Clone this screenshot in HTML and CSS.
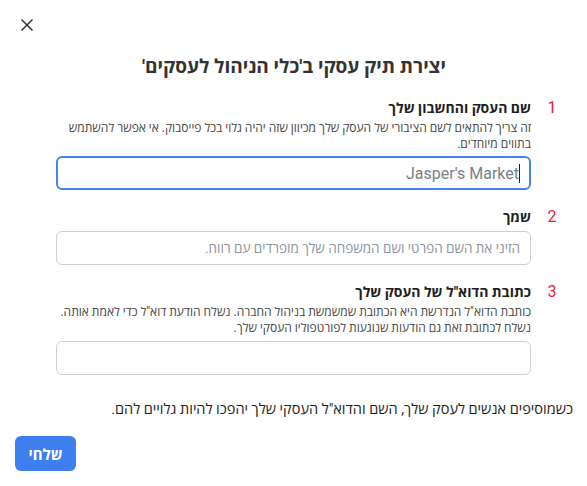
FILE: index.html
```html
<!DOCTYPE html>
<html lang="he" dir="rtl">
<head>
<meta charset="utf-8">
<link rel="stylesheet" href="styles.css">
</head>
<body>
<div class="dialog">
  <div class="topbar">
    <button class="close" aria-label="סגירה">
      <svg width="14" height="14" viewBox="0 0 14 14"><path d="M1.5 1.5L12.5 12.5M12.5 1.5L1.5 12.5" stroke="#333" stroke-width="1.5" fill="none"/></svg>
    </button>
  </div>
  <h1 class="title">יצירת תיק עסקי ב'כלי הניהול לעסקים'</h1>
  <div class="fields">
    <div class="field">
      <span class="num">1</span>
      <div class="body">
        <div class="label">שם העסק והחשבון שלך</div>
        <div class="desc">זה צריך להתאים לשם הציבורי של העסק שלך מכיוון שזה יהיה גלוי בכל פייסבוק. אי אפשר להשתמש בתווים מיוחדים.</div>
        <div class="input focused"><span class="value">Jasper's Market<span class="caret"></span></span></div>
      </div>
    </div>
    <div class="field">
      <span class="num">2</span>
      <div class="body">
        <div class="label">שמך</div>
        <div class="input"><span class="placeholder">הזיני את השם הפרטי ושם המשפחה שלך מופרדים עם רווח.</span></div>
      </div>
    </div>
    <div class="field">
      <span class="num">3</span>
      <div class="body">
        <div class="label">כתובת הדוא"ל של העסק שלך</div>
        <div class="desc">כותבת הדוא"ל הנדרשת היא הכתובת שמשמשת בניהול החברה. נשלח הודעת דוא"ל כדי לאמת אותה. נשלח לכתובת זאת גם הודעות שנוגעות לפורטפוליו העסקי שלך.</div>
        <div class="input"></div>
      </div>
    </div>
    <p class="note">כשמוסיפים אנשים לעסק שלך, השם והדוא"ל העסקי שלך יהפכו להיות גלויים להם.</p>
  </div>
  <div class="actions">
    <button class="submit">שלחי</button>
  </div>
</div>
</body>
</html>
```

FILE: styles.css
```css
html, body {
  margin: 0;
  background: #fff;
}
body {
  font-family: Roboto, "Open Sans", sans-serif;
  color: #1c1e21;
}
.dialog {
  padding: 18px 14px 0 15px;
}
.topbar {
  display: flex;
  justify-content: flex-end;
  height: 14px;
}
.close {
  border: 0;
  background: none;
  padding: 0;
  margin-left: 5px;
  width: 14px;
  height: 14px;
  display: flex;
}
.title {
  margin: 23px 0 0;
  text-align: center;
  font-size: 19px;
  line-height: 24px;
  font-weight: bold;
  color: #333;
}
.fields {
  margin: 20px 0 0 41px;
}
.field {
  display: grid;
  grid-template-columns: 42px 1fr;
  margin-bottom: 18px;
}
.num {
  color: #e41e3f;
  font-size: 16px;
  line-height: 18px;
  text-align: center;
}
.label {
  font-size: 14px;
  font-weight: bold;
  line-height: 18px;
  color: #1c1e21;
}
.desc {
  font-size: 12px;
  line-height: 16px;
  color: #444;
  margin-top: 3px;
}
.input {
  box-sizing: border-box;
  margin-top: 5px;
  height: 34px;
  border: 1px solid #ccd0d5;
  border-radius: 6px;
  display: flex;
  align-items: center;
  padding: 0 10px;
  font-size: 13.5px;
}
.input.focused {
  border: 2px solid #4a80ea;
  padding: 0 9px;
  margin-top: 4px;
}
.value {
  color: #7a7f86;
  direction: ltr;
  display: flex;
  align-items: center;
  font-size: 16px;
}
.caret {
  width: 1px;
  height: 19px;
  background: #1c1e21;
}
.placeholder {
  color: #8d949e;
}
.note {
  margin: 26px 0 0;
  font-size: 14.5px;
  line-height: 18px;
  color: #1c1e21;
}
.actions {
  display: flex;
  justify-content: flex-end;
  margin-top: 17px;
}
.submit {
  font-family: inherit;
  width: 61px;
  height: 35px;
  border: 0;
  border-radius: 6px;
  background: #3e7ff0;
  color: #fff;
  font-size: 15px;
  font-weight: bold;
}
```
